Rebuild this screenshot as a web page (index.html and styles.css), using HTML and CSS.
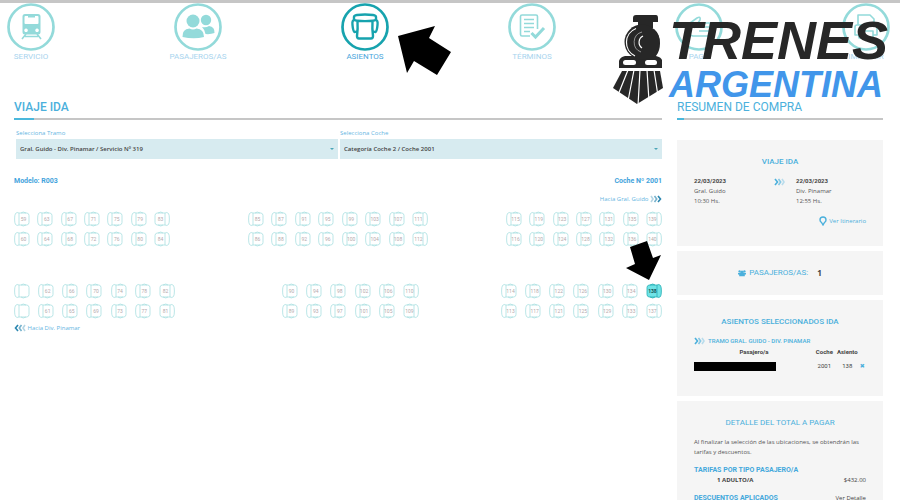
FILE: index.html
```html
<!DOCTYPE html>
<html lang="es">
<head>
<meta charset="utf-8">
<meta name="viewport" content="width=device-width, initial-scale=1">
<title>Trenes Argentina - Asientos</title>
<link rel="stylesheet" href="styles.css">
</head>
<body>
<svg class="defs" aria-hidden="true">
  <symbol id="seat" viewBox="0 0 16 16">
    <path d="M5 2h8q2 .5 2 2.500v7q0 2-2 2.500H5M5 2Q3 .8 1.500 2.500Q.6 4 .6 8T1.500 13.500Q3 15.200 5 14zM7 2q2-2 5 0M7 14q2 2 5 0"/>
  </symbol>
  <symbol id="chevrons" viewBox="0 0 12 8">
    <path d="M1 1l2 3-2 3" opacity=".35"/><path d="M4.500 1l2.200 3-2.200 3" opacity=".65"/><path d="M8 1l2.500 3L8 7"/>
  </symbol>
  <symbol id="chevrons-fading" viewBox="0 0 12 8">
    <path d="M1 1l2.500 3L1 7"/><path d="M4.500 1l2.200 3-2.200 3" opacity=".65"/><path d="M8 1l2 3-2 3" opacity=".35"/>
  </symbol>
</svg>

<nav aria-label="Pasos de la compra">
  <ol class="steps">
    <li class="step">
      <svg class="step-icon" viewBox="0 0 48 48"><circle cx="24" cy="24" r="22.500"/>
        <path class="solid" fill-rule="evenodd" d="M18 11h13q2.500 0 2.500 2.500V29q0 2.500-2.500 2.500H18q-2.500 0-2.500-2.500V13.500Q15.500 11 18 11zM17.500 14v6q0 1 1 1h12q1 0 1-1v-6q0-1-1-1H28v1.500h-7V13h-2.500q-1 0-1 1zM19 25.500a1.800 1.800 0 1 0 .1 0zM30 25.500a1.800 1.800 0 1 0 .1 0z"/>
        <path class="thin" d="M19 31l-4 5M30 31l4 5M18 33.500h13"/></svg>
      <span>SERVICIO</span></li>
    <li class="step">
      <svg class="step-icon" viewBox="0 0 48 48"><circle cx="24" cy="24" r="22.500"/>
        <circle class="solid" cx="19" cy="18" r="6.500"/><circle class="solid" cx="32" cy="17" r="5.200"/>
        <path class="solid" d="M8.500 34q-.5-8 7-8.500 3.500 2 7 0 7.500 .5 7.500 8.500-10 2.500-21.500 0zM28 24q4 1 7-1 6 1 5.500 7-4 1.500-9 1-.5-4-3.500-7z"/></svg>
      <span>PASAJEROS/AS</span></li>
    <li class="step active" aria-current="step">
      <svg class="step-icon" viewBox="0 0 48 48"><circle cx="24" cy="24" r="22.500"/>
        <path class="stroke" d="M13 16v-2q0-1.500 3-2 8-1 16 0 3 .5 3 2v2q0 1.500-3 1.700-8 .8-16 0-3-.2-3-1.700zM13 17q-2 .5-1.500 5 .5 6 2 7 2 0 2.500-1M35 17q2 .5 1.500 5-.5 6-2 7-2 0-2.500-1M16.500 19q.5 6-.5 14 0 2.500 2 2.500h12q2 0 2-2.500-1-8-.5-14"/></svg>
      <span>ASIENTOS</span></li>
    <li class="step">
      <svg class="step-icon" viewBox="0 0 48 48"><circle cx="24" cy="24" r="22.500"/>
        <path class="stroke" d="M22 33h-8q-1.500 0-1.500-1.500v-18Q12.500 12 14 12h14q1.500 0 1.500 1.500V26M16 16.500h10M16 20.500h10M16 24.500h10M16 28.500h6"/>
        <path class="tick" d="M23.500 30l4 4L36 25"/></svg>
      <span>TÉRMINOS</span></li>
    <li class="step">
      <svg class="step-icon" viewBox="0 0 48 48"><circle cx="24" cy="24" r="22.500"/>
        <path class="stroke" d="M11 23l11-8q4-2 3 2l-2 3h12v13H18q-3-1-7-2M23 20l-4 5M35 24H24M35 28H24"/></svg>
      <span>PAGO</span></li>
    <li class="step">
      <svg class="step-icon" viewBox="0 0 48 48"><circle cx="24" cy="24" r="22.500"/>
        <path class="stroke" d="M16 22V12h12l4 4v6M17 32h-4v-8q0-2 2-2h18q2 0 2 2v8h-4M17 28h14v7H17z"/></svg>
      <span>IMPRIMIR</span></li>
  </ol>
</nav>

<div class="brand">
  <svg class="brand-train" viewBox="0 0 52 92" aria-hidden="true">
    <path class="ink" d="M24 2h20q2 0 2 3v4h-5v6H26V9h-5V5q0-3 3-3z"/>
    <path class="ink" d="M42 16q6 5 6 14 0 8-4 13 5 1 6 4v8H7v-7q1-4 6-5h10z"/>
    <circle class="ink" cx="30" cy="29" r="17.500"/>
    <path class="gap" d="M24 15.500a15 15 0 0 0-1 27.500M31 23a7 7 0 0 0-1 12"/><path class="gap hair" d="M30 19a10.500 10.500 0 0 0-1 20"/>
    <rect class="light" x="11" y="47" width="13" height="5" rx="2.500"/><rect class="light" x="33" y="47" width="12" height="5" rx="2.500"/>
    <path class="ink" d="M10 58h38l3 17-26 16L1 75z"/>
    <path class="bars" d="M16 57L6 82M22 57l-6 31M28 57l-2 36M35 57l2 31M42 57l4 26"/>
  </svg>
  <div class="brand-name"><span class="brand-top">TRENES</span><span class="brand-bottom">ARGENTINA</span></div>
</div>

<svg class="pointer pointer-step" viewBox="0 0 56 50" aria-hidden="true"><path d="M0 10L37 0l-6 12 22 14-14 23-23-14-7 12z"/></svg>

<div class="layout">
  <main>
    <h1 class="title">VIAJE IDA</h1>
    <form class="filters">
      <div class="field">
        <label for="tramo">Selecciona Tramo</label>
        <div class="select"><select id="tramo"><option>Gral. Guido - Div. Pinamar / Servicio Nº 319</option></select></div>
      </div>
      <div class="field">
        <label for="coche">Selecciona Coche</label>
        <div class="select"><select id="coche"><option>Categoría Coche 2 / Coche 2001</option></select></div>
      </div>
    </form>
    <div class="car-info"><strong>Modelo: R003</strong><strong>Coche Nº 2001</strong></div>
    <p class="direction forward">Hacia Gral. Guido <svg class="chev"><use href="#chevrons"/></svg></p>
    <div class="car">
      <div class="side side-upper" id="upper"></div>
      <div class="side side-lower" id="lower"></div>
      <svg class="pointer pointer-seat" viewBox="0 0 36 40" aria-hidden="true"><path d="M4 6L21 0l6 17 8-3-12 25L0 27l9-4z"/></svg>
    </div>
    <p class="direction"><svg class="chev back"><use href="#chevrons"/></svg> Hacia Div. Pinamar</p>
  </main>

  <aside>
    <h2 class="title">RESUMEN DE COMPRA</h2>
    <section class="card trip">
      <h3>VIAJE IDA</h3>
      <div class="stops">
        <p><b>22/03/2023</b><br>Gral. Guido<br>10:30 Hs.</p>
        <svg class="chev onward"><use href="#chevrons-fading"/></svg>
        <p><b>22/03/2023</b><br>Div. Pinamar<br>12:55 Hs.</p>
      </div>
      <a class="itinerary" href="#"><svg viewBox="0 0 8 10"><path d="M4 9L2.500 6.500Q1 5.500 1 4a3 3 0 0 1 6 0q0 1.500-1.500 2.500z"/></svg>Ver Itinerario</a>
    </section>
    <section class="card people">
      <h3><svg viewBox="0 0 10 10"><circle cx="2" cy="3" r="1.500"/><circle cx="8" cy="3" r="1.500"/><circle cx="5" cy="4" r="2"/><path d="M0 5h10v2H8.500v2h-7V7H0z"/></svg>PASAJEROS/AS:</h3><b>1</b>
    </section>
    <section class="card chosen">
      <h3>ASIENTOS SELECCIONADOS IDA</h3>
      <p class="leg"><svg class="chev onward"><use href="#chevrons-fading"/></svg>TRAMO GRAL. GUIDO - DIV. PINAMAR</p>
      <table>
        <thead><tr><th class="who">Pasajero/a</th><th>Coche</th><th>Asiento</th><th></th></tr></thead>
        <tbody><tr><td class="who"><span class="redacted"></span></td><td>2001</td><td>138</td><td><button class="remove" type="button" aria-label="Quitar asiento">✖</button></td></tr></tbody>
      </table>
    </section>
    <section class="card total">
      <h3>DETALLE DEL TOTAL A PAGAR</h3>
      <p>Al finalizar la selección de las ubicaciones, se obtendrán las tarifas y descuentos.</p>
      <h4>TARIFAS POR TIPO PASAJERO/A</h4>
      <div class="line"><b class="fare">1 ADULTO/A</b><span>$432.00</span></div>
      <div class="line discounts"><h4>DESCUENTOS APLICADOS</h4><a href="#">Ver Detalle</a></div>
    </section>
  </aside>
</div>
<script src="seats.js"></script>
</body>
</html>
```
FILE: styles.css
```css
* { box-sizing: border-box; }
body {
  margin: 0;
  border-top: 3px solid #c6c6c6;
  background: #fff;
  color: #555;
  font: 6px/10px "Open Sans", "Noto Sans", sans-serif;
}
h1, h2, h3, h4, p, ol { margin: 0; padding: 0; }
a { color: inherit; text-decoration: none; }
.defs { position: absolute; width: 0; height: 0; }

.steps { display: flex; justify-content: space-between; margin: 0 10px 0 7px; list-style: none; }
.step { display: flex; flex-direction: column; align-items: center; width: 48px; color: #a8d4ee; font: 8px/12px Roboto, sans-serif; white-space: nowrap; }
.step-icon { flex: none; width: 48px; height: 48px; fill: none; stroke: #93dada; stroke-width: 2.7; }
.step-icon .solid { fill: #93dada; stroke: none; }
.step-icon .stroke, .step-icon .thin { stroke-width: 1.6; stroke-linejoin: round; }
.step-icon .tick { stroke-width: 3; }
.step.active { color: #4ba6dc; }
.active .step-icon { stroke: #17a3ae; }
.active .step-icon .stroke { stroke-width: 2.4; }

.brand { position: absolute; z-index: 2; top: 13px; right: 12px; display: flex; gap: 5px; }
.brand-train { width: 52px; height: 92px; }
.brand-train .ink { fill: #272727; }
.brand-train .gap { fill: none; stroke: #fff; stroke-width: 1.2; }
.brand-train .hair { stroke-width: .5; }
.brand-train .bars { stroke: #fff; stroke-width: 1.2; }
.brand-train .light { fill: #fff; }
.brand-name { display: flex; flex-direction: column; color: #272727; font-family: "Liberation Sans", Arial, sans-serif; font-weight: bold; font-style: italic; }
.brand-top { font-size: 54px; line-height: 54px; }
.brand-bottom { color: #4196ea; font-size: 36px; line-height: 36px; }

.pointer { position: absolute; fill: #000; }
.pointer-step { top: 26px; left: 398px; width: 56px; height: 50px; }
.pointer-seat { top: 30px; right: 0; width: 36px; height: 40px; }

.layout { display: grid; grid-template-columns: minmax(0, 1fr) 206px; gap: 15px; padding: 37px 17px 0 14px; }
.title { position: relative; padding-bottom: 4px; border-bottom: 2px solid #c6c6c6; color: #4bb0dc; font: 12px/14px Roboto, sans-serif; }
.title::after { content: ""; position: absolute; left: 0; bottom: -2px; width: 20px; height: 2px; background: #4bb8dc; }
aside .title::after { width: 7px; }

.filters { display: grid; grid-template-columns: 1fr 1fr; gap: 2px; padding: 7px 0 0 2px; }
.field label { display: block; color: #65b5df; line-height: 12px; }
.select { position: relative; }
.select::after { content: ""; position: absolute; right: 4px; top: 9px; border: 2px solid transparent; border-top-color: #4ba6b8; }
.select select { display: block; width: 100%; height: 20px; padding: 0 4px; border: 0; border-radius: 0; background: #d7ebf0; color: #444; font: 600 6px/20px "Open Sans", sans-serif; appearance: none; }

.car-info { display: flex; justify-content: space-between; margin-top: 16px; color: #43a3dc; font: 7px/12px Roboto, sans-serif; }
.direction { color: #65b5df; }
.forward { margin-top: 7px; text-align: right; }
.chev { width: 12px; height: 8px; vertical-align: middle; fill: none; stroke: #2b87b0; stroke-width: 1.6; }
.back { transform: scaleX(-1); }
.onward { stroke: #4bb0dc; }

.car { position: relative; display: grid; gap: 36px; margin: 7px 0 4px; }
.side { display: grid; }
.side-upper { grid-template-columns: 156fr 78fr 180fr 78fr 156fr; }
.side-lower { grid-template-columns: 161fr 107fr 137fr 82fr 161fr; }
.block { display: grid; gap: 4px; }
.block:nth-child(2) { grid-column: 3; }
.block:nth-child(3) { grid-column: 5; }
.row { display: flex; justify-content: space-between; }
.seat { position: relative; width: 16px; height: 16px; padding: 0 0 0 3px; border: 0; background: none; color: #b5a9ac; font: 5px/16px Roboto, sans-serif; text-align: center; }
.seat svg { position: absolute; inset: 0; width: 16px; height: 16px; fill: none; stroke: #a9dfe1; stroke-width: .8; }
.seat span { position: relative; }
.seat.flip { padding: 0 3px 0 0; }
.flip svg { transform: scaleX(-1); }
.seat.picked { color: #155; font-weight: bold; }
.seat.picked svg { fill: #6fe3e6; stroke: #26aeb4; }

.card { margin-bottom: 5px; padding: 0 17px; background: #f5f5f5; }
.card h3 { color: #4bb0dc; font: 8px/12px Roboto, sans-serif; text-align: center; }
.card h4 { color: #43a8dc; font: bold 7px/10px Roboto, sans-serif; }
.trip { margin-top: 20px; padding-top: 16px; padding-bottom: 20px; }
.card.trip h3, .card.chosen h3, main .title { font-weight: 500; }
.stops { display: grid; grid-template-columns: 80px 22px 1fr; margin-top: 8px; }
.stops b { font-family: Roboto, sans-serif; color: #444; }
.stops .chev { margin-top: 2px; }
.itinerary { display: flex; justify-content: flex-end; align-items: center; gap: 2px; margin-top: 10px; color: #4bb0dc; line-height: 10px; }
.itinerary svg { width: 8px; height: 10px; fill: none; stroke: #4bb0dc; stroke-width: 1.4; }
.people { display: flex; justify-content: center; gap: 9px; padding: 16px 0; color: #444; font-size: 8px; line-height: 12px; }
.people svg { width: 8px; height: 8px; margin-right: 3px; vertical-align: middle; fill: #4bb0dc; }
.chosen { padding-top: 16px; padding-bottom: 24px; }
.leg { color: #4bb0dc; font: 500 6px/10px Roboto, sans-serif; }
.card .leg { margin-top: 8px; }
.leg .chev { margin-right: 2px; }
table { width: 100%; border-collapse: collapse; color: #444; font-family: Roboto, sans-serif; }
th, td { padding: 0; text-align: center; line-height: 12px; }
td { padding-top: 2px; }
.who { width: 120px; }
.redacted { display: block; width: 82px; height: 9px; background: #000; }
.remove { display: block; padding: 0; border: 0; background: none; color: #4bb0dc; font: 6px/12px "DejaVu Sans", sans-serif; }
.total { padding-top: 16px; padding-bottom: 20px; }
.total p { margin: 8px 0; }
.line { display: flex; justify-content: space-between; color: #444; line-height: 11px; }
.fare { padding-left: 23px; }
.discounts { margin-top: 7px; }
```
FILE: seats.js
```js
// Seat numbers of the coach, by side, block and row. 0 marks a seat without number.
const coach = {
  upper: [
    [[59, 63, 67, 71, 75, 79, 83], [60, 64, 68, 72, 76, 80, 84]],
    [[85, 87, 91, 95, 99, 103, 107, 111], [86, 88, 92, 96, 100, 104, 108, 112]],
    [[115, 119, 123, 127, 131, 135, 139], [116, 120, 124, 128, 132, 136, 140]]
  ],
  lower: [
    [[0, 62, 66, 70, 74, 78, 82], [0, 61, 65, 69, 73, 77, 81]],
    [[90, 94, 98, 102, 106, 110], [89, 93, 97, 101, 105, 109]],
    [[114, 118, 122, 126, 130, 134, 138], [113, 117, 121, 125, 129, 133, 137]]
  ]
};
const selected = 138;

function seat(number, index, row) {
  const classes = ["seat"];
  if (index === row.length - 1) classes.push("flip");
  if (number === selected) classes.push("picked");
  return `<button type="button" class="${classes.join(" ")}" aria-label="Asiento ${number || ""}">` +
    `<svg><use href="#seat"/></svg><span>${number || ""}</span></button>`;
}

for (const [side, blocks] of Object.entries(coach)) {
  document.getElementById(side).innerHTML = blocks.map(rows =>
    `<div class="block">${rows.map(r => `<div class="row">${r.map(seat).join("")}</div>`).join("")}</div>`
  ).join("");
}
```
